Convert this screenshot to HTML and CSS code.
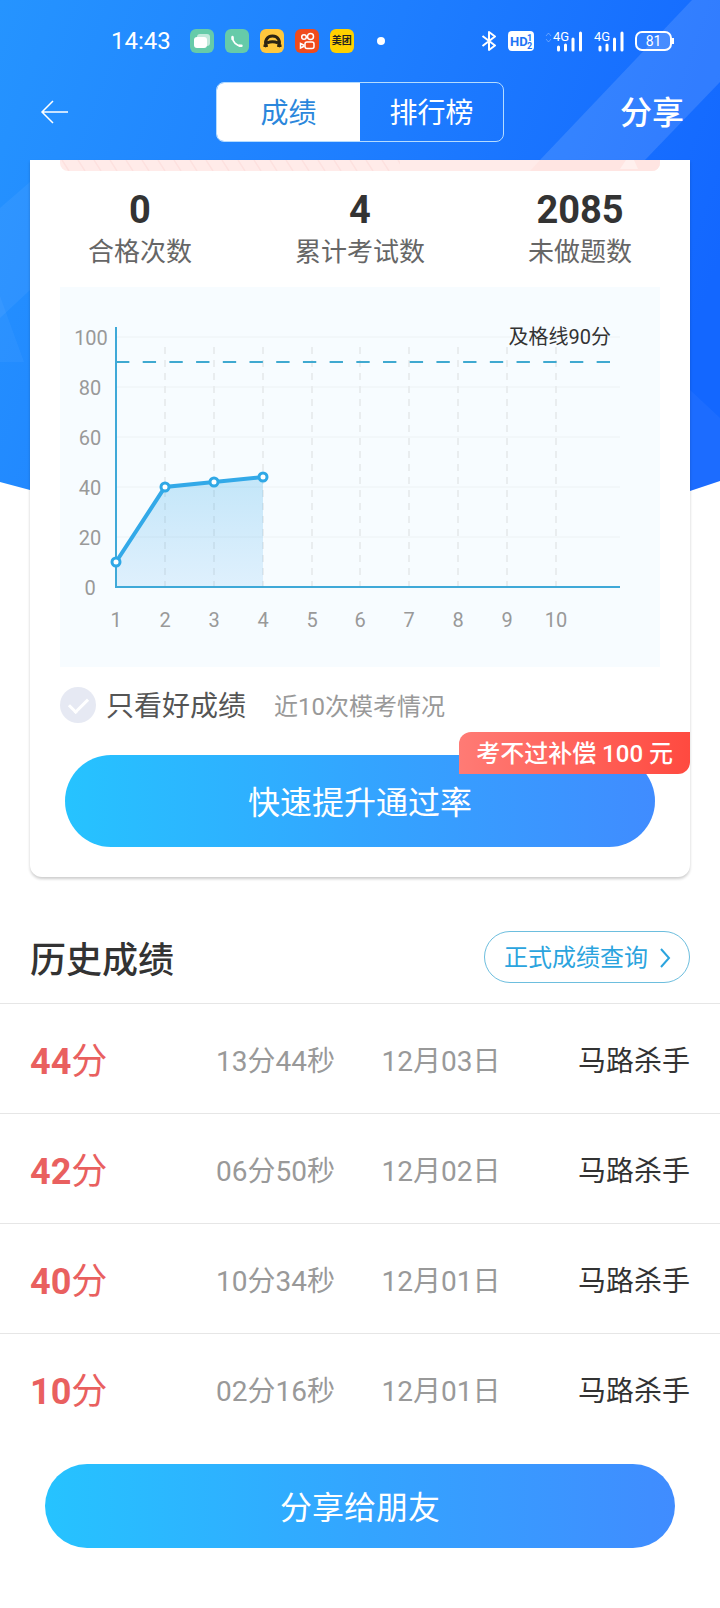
FILE: index.html
```html
<!DOCTYPE html>
<html lang="zh-CN">
<head>
<meta charset="utf-8">
<meta name="viewport" content="width=device-width, initial-scale=1">
<title>成绩</title>
<link rel="stylesheet" href="styles.css">
</head>
<body>
<div class="page">
  <svg class="hero" viewBox="0 0 720 500" preserveAspectRatio="none" aria-hidden="true">
    <defs>
      <linearGradient id="heroFill" x1="0" y1="0" x2="720" y2="260" gradientUnits="userSpaceOnUse">
        <stop offset="0" stop-color="#2594ff"/>
        <stop offset="0.5" stop-color="#1e7eff"/>
        <stop offset="1" stop-color="#1367ff"/>
      </linearGradient>
    </defs>
    <path d="M0 0H720V481L690 491L360 500L30 490L0 482Z" fill="url(#heroFill)"/>
    <path d="M692 0H720V82L645 160H540Z" fill="#fff" fill-opacity="0.12"/>
    <path d="M0 208L30 182V290L0 318Z" fill="#fff" fill-opacity="0.05"/>
    <path d="M0 296L24 362H0Z" fill="#fff" fill-opacity="0.04"/>
    <path d="M690 390L720 418V481L690 491Z" fill="#fff" fill-opacity="0.04"/>
  </svg>

  <header class="header">
    <div class="status">
      <div class="status-left">
        <span class="clock">14:43</span>
        <svg class="app" viewBox="0 0 24 24" aria-hidden="true"><rect width="24" height="24" rx="6" fill="#66cba9"/><rect x="7" y="5" width="13" height="12" rx="3" fill="#fff" fill-opacity="0.6"/><rect x="4" y="8" width="13" height="11" rx="3" fill="#fff"/></svg>
        <svg class="app" viewBox="0 0 24 24" aria-hidden="true"><rect width="24" height="24" rx="6" fill="#66cba9"/><path d="M7.500 8C7.500 13 11.500 17 16.500 17" fill="none" stroke="#fff" stroke-width="1.600"/><path d="M7.500 8v2M14.500 16.800h2" stroke="#fff" stroke-width="2.400" stroke-linecap="round"/></svg>
        <svg class="app" viewBox="0 0 24 24" aria-hidden="true"><rect width="24" height="24" rx="6" fill="#ffc83d"/><path d="M6.500 18C4 12 7 7 12.500 7S21 12 18.500 18M7 14Q12.500 11.500 18 14" fill="none" stroke="#2b2413" stroke-width="3"/><path d="M3.500 15.500h4v2.500h-4zM21.500 15.500h-4v2.500h4z" fill="#2b2413"/></svg>
        <svg class="app" viewBox="0 0 24 24" aria-hidden="true"><rect width="24" height="24" rx="6" fill="#f04b1c"/><g fill="none" stroke="#fff" stroke-width="1.500"><circle cx="9" cy="8" r="2.300"/><circle cx="15.500" cy="7.500" r="3"/><rect x="10" y="13" width="9" height="6.500" rx="2"/><path d="M9.500 16.500L5.500 14.500V19L9.500 17"/></g></svg>
        <span class="app meituan">美团</span>
        <span class="dot"></span>
      </div>
      <div class="status-right">
        <svg width="16" height="22" viewBox="0 0 16 22" aria-hidden="true"><path d="M2.500 6L15 15.500L9 20V2L15 6.500L2.500 16" fill="none" stroke="#fff" stroke-width="2" stroke-linejoin="round"/></svg>
        <svg width="27" height="22" viewBox="0 0 27 22" aria-hidden="true"><rect x="1" y="1" width="26" height="20" rx="4" fill="#fff"/><text x="3" y="16" font-size="13" font-weight="700" fill="#1f74f5">HD</text><text x="20" y="11" font-size="9" font-weight="700" fill="#1f74f5">1</text><text x="20" y="19" font-size="9" font-weight="700" fill="#1f74f5">2</text></svg>
        <svg width="38" height="22" viewBox="0 0 38 22" aria-hidden="true"><path d="M1 6l2.500-3L6 6M1 9l2.500 3L6 9" fill="none" stroke="#fff" stroke-opacity="0.3"/><text x="8" y="11" font-size="13" fill="#fff">4G</text><path d="M13.500 17v3M20.500 15v5M28 9v11M35.500 3v17" stroke="#fff" stroke-width="3" stroke-linecap="round"/></svg>
        <svg width="30" height="22" viewBox="0 0 30 22" aria-hidden="true"><text x="0" y="11" font-size="13" fill="#fff">4G</text><path d="M6 17v3M13 15v5M20.500 9v11M28 3v17" stroke="#fff" stroke-width="3" stroke-linecap="round"/></svg>
        <svg width="40" height="22" viewBox="0 0 40 22" aria-hidden="true"><rect x="1" y="2" width="35" height="18" rx="6" fill="#fff" fill-opacity="0.1" stroke="#fff" stroke-width="2"/><path d="M38 8v6" stroke="#fff" stroke-width="2"/><text x="18.500" y="16" font-size="14" text-anchor="middle" fill="#fff">81</text></svg>
      </div>
    </div>
    <nav class="nav">
      <button class="back" type="button" aria-label="返回"><svg width="28" height="24" viewBox="0 0 28 24"><path d="M13 1L2 12L13 23M2 12H28" fill="none" stroke="#fff" stroke-width="1.500"/></svg></button>
      <div class="tabs" role="tablist">
        <button class="tab tab-active" type="button" role="tab" aria-selected="true">成绩</button>
        <button class="tab" type="button" role="tab" aria-selected="false">排行榜</button>
      </div>
      <button class="share" type="button">分享</button>
    </nav>
  </header>

  <main>
    <section class="card">
      <svg class="banner" viewBox="0 0 600 11" preserveAspectRatio="none" aria-hidden="true">
        <defs><pattern id="hatch" width="16" height="11" patternUnits="userSpaceOnUse"><path d="M2 0L9 11" stroke="#fde1df" stroke-width="1.500"/></pattern></defs>
        <rect width="600" height="11" fill="#ffebe9"/><rect width="340" height="11" fill="url(#hatch)"/>
        <path d="M480 0H600V11H470Z" fill="#ffe5e2"/><path d="M566 0h8l4 9H560Z" fill="#fff0ee"/>
      </svg>
      <dl class="stats">
        <div class="stat"><dt>合格次数</dt><dd>0</dd></div>
        <div class="stat"><dt>累计考试数</dt><dd>4</dd></div>
        <div class="stat"><dt>未做题数</dt><dd>2085</dd></div>
      </dl>
      <svg class="chart" viewBox="0 0 600 380" role="img" aria-label="近10次模考成绩折线图">
        <defs><linearGradient id="area" x1="0" y1="0" x2="0" y2="1"><stop offset="0" stop-color="#2fa8e6" stop-opacity="0.26"/><stop offset="1" stop-color="#4aa8f0" stop-opacity="0.14"/></linearGradient></defs>
        <path class="grid-h" d="M56 50H560M56 100H560M56 150H560M56 200H560M56 250H560"/>
        <path class="grid-v" d="M105 60V300M154 60V300M203 60V300M252 60V300M300 60V300M349 60V300M398 60V300M447 60V300M496 60V300"/>
        <path d="M56 275L105 200L154 195L203 190V300H56Z" fill="url(#area)"/>
        <path class="pass" pathLength="37" d="M56 75H550"/>
        <path class="axis" d="M56 40V300H560"/>
        <path class="line" d="M56 275L105 200L154 195L203 190"/>
        <g class="points"><circle cx="56" cy="275" r="4"/><circle cx="105" cy="200" r="4"/><circle cx="154" cy="195" r="4"/><circle cx="203" cy="190" r="4"/></g>
        <g class="ticks"><text x="31" y="58">100</text><text x="30" y="108">80</text><text x="30" y="158">60</text><text x="30" y="208">40</text><text x="30" y="258">20</text><text x="30" y="308">0</text>
        <text x="56" y="340">1</text><text x="105" y="340">2</text><text x="154" y="340">3</text><text x="203" y="340">4</text><text x="252" y="340">5</text><text x="300" y="340">6</text><text x="349" y="340">7</text><text x="398" y="340">8</text><text x="447" y="340">9</text><text x="496" y="340">10</text></g>
        <text class="pass-label" x="551" y="57">及格线90分</text>
      </svg>
      <div class="filter">
        <label class="only-good"><input type="checkbox"><span class="label-text">只看好成绩</span></label>
        <span class="label-text hint">近10次模考情况</span>
      </div>
      <div class="boost">
        <button class="cta" type="button">快速提升通过率</button>
        <span class="badge">考不过补偿 100 元</span>
      </div>
    </section>

    <section class="history">
      <div class="history-head">
        <h2>历史成绩</h2>
        <a class="query" href="#">正式成绩查询<svg width="12" height="20" viewBox="0 0 12 20" aria-hidden="true"><path d="M2 1L10 10L2 19" fill="none" stroke="#2ba4de" stroke-width="2"/></svg></a>
      </div>
      <table class="records">
        <tr><td class="score"><b>44</b>分</td><td class="time">13分44秒</td><td class="date">12月03日</td><td class="rank">马路杀手</td></tr>
        <tr><td class="score"><b>42</b>分</td><td class="time">06分50秒</td><td class="date">12月02日</td><td class="rank">马路杀手</td></tr>
        <tr><td class="score"><b>40</b>分</td><td class="time">10分34秒</td><td class="date">12月01日</td><td class="rank">马路杀手</td></tr>
        <tr><td class="score"><b>10</b>分</td><td class="time">02分16秒</td><td class="date">12月01日</td><td class="rank">马路杀手</td></tr>
      </table>
    </section>
  </main>

  <footer class="footer"><button class="cta cta-share" type="button">分享给朋友</button></footer>
</div>
</body>
</html>
```
FILE: styles.css
```css
* { box-sizing: border-box; }

body {
  margin: 0;
  background: #fff;
  color: #333;
  font-family: Roboto, "Noto Sans CJK SC", sans-serif;
}

button {
  margin: 0;
  padding: 0;
  border: 0;
  background: none;
  color: inherit;
  font: inherit;
}

.page { position: relative; }

.hero {
  position: absolute;
  top: 0;
  left: 0;
  z-index: -1;
  width: 100%;
  height: 500px;
}

.header { padding-bottom: 18px; color: #fff; }

.status {
  display: flex;
  align-items: center;
  justify-content: space-between;
  height: 82px;
  padding: 0 45px 0 111px;
}

.status-left,
.status-right { display: flex; align-items: center; gap: 11px; }

.clock { margin-right: 8px; font-size: 24px; line-height: 28px; }

.app { flex: none; width: 24px; height: 24px; }

.meituan {
  border-radius: 6px;
  background: #ffd100;
  color: #222;
  font-size: 10px;
  font-weight: 700;
  line-height: 24px;
  text-align: center;
}

.dot {
  width: 8px;
  height: 8px;
  margin-left: 12px;
  border-radius: 50%;
  background: #fff;
}

.nav {
  display: grid;
  grid-template-columns: 1fr 288px 1fr;
  align-items: center;
  padding: 0 36px;
}

.back { display: flex; justify-self: start; padding: 0 4px; }

.tabs {
  display: grid;
  grid-template-columns: 1fr 1fr;
  height: 60px;
  overflow: hidden;
  border: 1px solid #b5dcff;
  border-radius: 8px;
}

.tab { padding-top: 4px; font-size: 28px; line-height: 54px; }

.tab-active { background: #fff; color: #2b87dc; }

.share {
  justify-self: end;
  padding-top: 2px;
  font-size: 32px;
  font-weight: 500;
  line-height: 48px;
}

.card {
  margin: 0 30px;
  border-radius: 0 0 12px 12px;
  background: #fff;
  box-shadow: 0 2px 3px rgba(0, 0, 0, 0.2);
}

.banner {
  display: block;
  width: calc(100% - 60px);
  height: 11px;
  margin: 0 30px;
  border-radius: 0 0 8px 8px;
}

.stats {
  display: grid;
  grid-template-columns: repeat(3, 1fr);
  margin: 0;
  padding: 17px 0 15px;
  text-align: center;
}

.stat { display: flex; flex-direction: column-reverse; }

.stat dt { color: #666; font-size: 26px; line-height: 40px; }

.stat dd {
  margin: 0;
  font-size: 38px;
  font-weight: 700;
  line-height: 44px;
}

.chart {
  display: block;
  width: calc(100% - 60px);
  margin: 0 30px;
  background: #f7fcff;
}

.grid-h { fill: none; stroke: #edf2f4; stroke-width: 1; }
.grid-v { fill: none; stroke: #e9edef; stroke-width: 2; stroke-dasharray: 7 6; }
.pass { stroke: #3fa9d0; stroke-width: 2; stroke-dasharray: 1 1; }
.axis { fill: none; stroke: #3fa9d8; stroke-width: 2; }
.line { fill: none; stroke: #33a9e8; stroke-width: 4; }
.points { fill: #fff; stroke: #2fa8e6; stroke-width: 3; }
.ticks { fill: #999; font-size: 20px; text-anchor: middle; }
.pass-label { fill: #333; font-size: 20px; text-anchor: end; }

.filter {
  display: flex;
  align-items: center;
  gap: 28px;
  padding: 18px 30px 0;
}

.only-good {
  display: flex;
  align-items: center;
  gap: 10px;
  color: #555;
  font-size: 28px;
}

.label-text { padding-top: 4px; line-height: 36px; }

.only-good input {
  display: grid;
  place-items: center;
  width: 36px;
  height: 36px;
  margin: 0;
  border-radius: 50%;
  background: #e6e9f3;
  appearance: none;
}

.only-good input::after {
  content: "";
  width: 8px;
  height: 16px;
  margin-bottom: 4px;
  border: solid #fff;
  border-width: 0 3px 3px 0;
  transform: rotate(45deg);
}

.hint { color: #999; font-size: 24px; }

.boost { position: relative; padding: 30px 35px; }

.cta {
  display: block;
  width: 100%;
  height: 92px;
  padding-bottom: 2px;
  border-radius: 46px;
  background: linear-gradient(90deg, #26c3ff, #33a5ff 50%, #408cff);
  color: #fff;
  font-size: 32px;
}

.badge {
  position: absolute;
  top: 7px;
  right: 0;
  padding: 2px 17px 0;
  border-radius: 12px 0 12px 0;
  background: linear-gradient(90deg, #ff7b75, #ff4a40);
  color: #fff;
  font-size: 24px;
  font-weight: 500;
  line-height: 40px;
}

.history { padding-top: 54px; }

.history-head {
  display: flex;
  align-items: center;
  justify-content: space-between;
  padding: 0 30px 20px;
}

.history-head h2 {
  margin: 0;
  padding-top: 8px;
  font-size: 36px;
  font-weight: 500;
  line-height: 44px;
}

.query {
  display: flex;
  align-items: center;
  gap: 11px;
  padding: 2px 18px 0 19px;
  border: 1px solid #6dbede;
  border-radius: 26px;
  color: #2ba4de;
  font-size: 24px;
  line-height: 48px;
  text-decoration: none;
}

.records { width: 100%; border-collapse: collapse; table-layout: fixed; }

.records tr { border-top: 1px solid #e6e6e6; }

.records td {
  height: 110px;
  padding: 6px 0 0;
  font-size: 28px;
  line-height: 40px;
}

.records .score { width: 30%; padding-left: 30px; color: #e9605f; font-size: 36px; }
.records .time { width: 23%; color: #999; }
.records .date { width: 23%; color: #999; }
.records .rank { padding-right: 30px; text-align: right; }

.footer { padding: 20px 45px 60px; }

.cta-share { height: 84px; }
```
